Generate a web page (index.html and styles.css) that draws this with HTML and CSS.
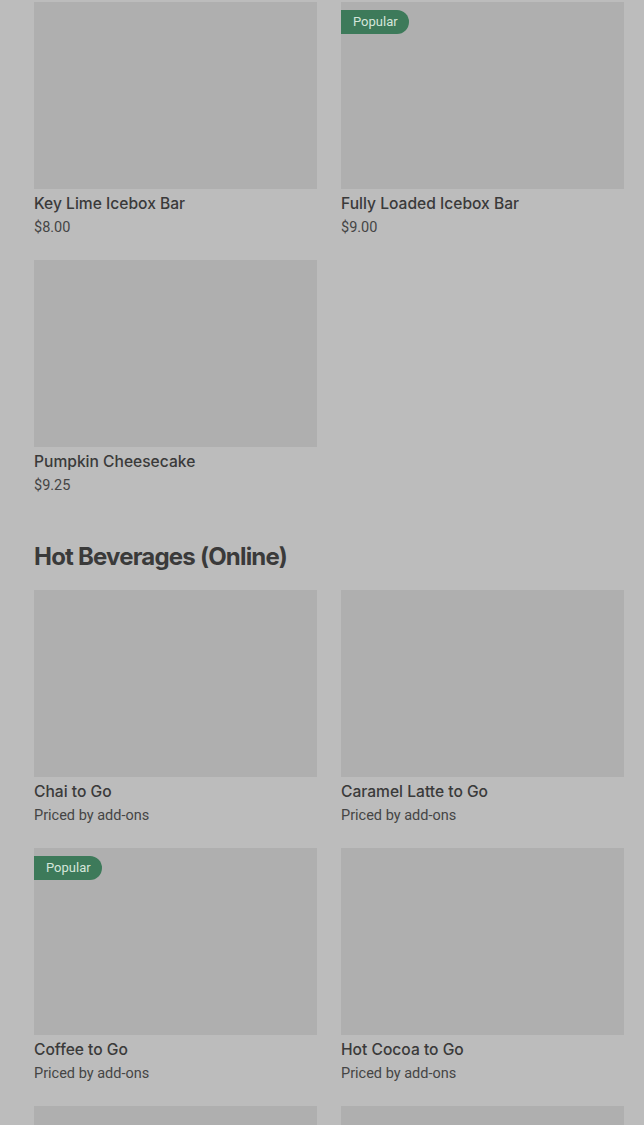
FILE: index.html
```html
<!DOCTYPE html>
<html lang="en">
<head>
  <meta charset="UTF-8">
  <title>Menu</title>
  <link rel="stylesheet" href="styles.css">
</head>
<body>
  <div class="menu">
    <div class="grid">
      <div class="item">
        <div class="photo"></div>
        <div class="name">Key Lime Icebox Bar</div>
        <div class="price">$8.00</div>
      </div>
      <div class="item">
        <div class="photo"><span class="badge">Popular</span></div>
        <div class="name">Fully Loaded Icebox Bar</div>
        <div class="price">$9.00</div>
      </div>
      <div class="item">
        <div class="photo"></div>
        <div class="name">Pumpkin Cheesecake</div>
        <div class="price">$9.25</div>
      </div>
    </div>

    <h2 class="section-title">Hot Beverages (Online)</h2>
    <div class="grid">
      <div class="item">
        <div class="photo"></div>
        <div class="name">Chai to Go</div>
        <div class="price">Priced by add-ons</div>
      </div>
      <div class="item">
        <div class="photo"></div>
        <div class="name">Caramel Latte to Go</div>
        <div class="price">Priced by add-ons</div>
      </div>
      <div class="item">
        <div class="photo"><span class="badge">Popular</span></div>
        <div class="name">Coffee to Go</div>
        <div class="price">Priced by add-ons</div>
      </div>
      <div class="item">
        <div class="photo"></div>
        <div class="name">Hot Cocoa to Go</div>
        <div class="price">Priced by add-ons</div>
      </div>
      <div class="item">
        <div class="photo"></div>
      </div>
      <div class="item">
        <div class="photo"></div>
      </div>
    </div>
  </div>
</body>
</html>
```

FILE: styles.css
```css
body {
  margin: 0;
  background-color: #bcbcbc;
  color: #3a3a3a;
  font-family: Roboto, "Liberation Sans", sans-serif;
}
.menu {
  padding: 2px 20px 0 34px;
}
.grid {
  display: grid;
  grid-template-columns: 283px 283px;
  column-gap: 24px;
}
.item {
  padding-bottom: 22px;
}
.photo {
  position: relative;
  height: 187px;
  background-color: #afafaf;
}
.badge {
  position: absolute;
  top: 8px;
  left: 0;
  height: 24px;
  line-height: 24px;
  padding: 0 11px 0 12px;
  background-color: #3d7a5a;
  color: #d5e6da;
  font-size: 13px;
  border-radius: 0 12px 12px 0;
}
.name {
  margin-top: 5px;
  font-family: Inter, "Liberation Sans", sans-serif;
  font-size: 15.6px;
  font-weight: 500;
  line-height: 20px;
}
.price {
  margin-top: 4px;
  font-size: 14.5px;
  line-height: 20px;
  color: #454545;
}
.section-title {
  margin: 21px 0 15px;
  font-family: Inter, "Liberation Sans", sans-serif;
  font-size: 24px;
  font-weight: 700;
  line-height: 36px;
  letter-spacing: -0.8px;
}
```
